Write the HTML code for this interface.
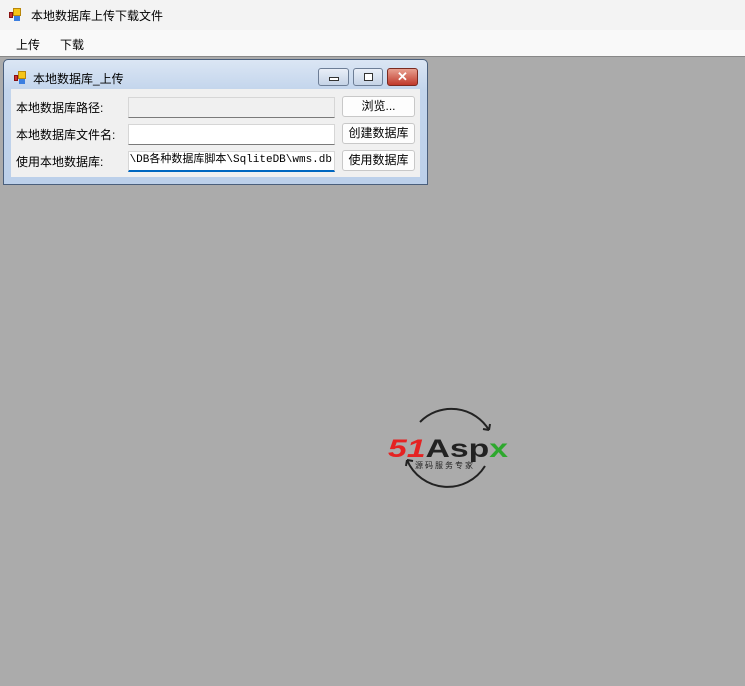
<!DOCTYPE html>
<html><head><meta charset="utf-8"><style>
*{margin:0;padding:0;box-sizing:border-box}
body{width:745px;height:686px;overflow:hidden;background:#ababab;font-family:"Liberation Sans","Noto Sans CJK SC",sans-serif;font-size:12px;color:#000;position:relative}
.title{position:absolute;left:0;top:0;width:745px;height:30px;background:#f3f3f3}
.title span{position:absolute;left:31px;top:7px;font-size:12px}
.menu{position:absolute;left:0;top:30px;width:745px;height:27px;background:#f9f9f9;border-bottom:1px solid #888}
.menu span{position:absolute;top:6px;font-size:12px}
.icon{position:absolute;width:14px;height:14px}
.icon i{position:absolute;display:block}
.child{position:absolute;left:3px;top:59px;width:425px;height:126px;border:1px solid #4a5f7c;border-radius:5px 5px 0 0;background:linear-gradient(#dbe6f4,#c3d5ec 30px,#bcd0ea)}
.child .t{position:absolute;left:29px;top:10px;font-size:12px}
.client{position:absolute;left:7px;top:29px;width:409px;height:88px;background:#f0f0f0}
.lbl{position:absolute;left:5px;font-size:12px}
.tb{position:absolute;left:117px;width:207px;height:21px;background:#fff;border:1px solid #d6d6d6;border-bottom:1px solid #7a7a7a}
.btn{position:absolute;left:331px;width:73px;height:21px;background:#fdfdfd;border:1px solid #c8c8c8;border-radius:3px;text-align:center;line-height:19px;font-size:12px}
.cb{position:absolute;top:8px;height:18px;border:1px solid #6d7e96;border-radius:3px;background:linear-gradient(#e9eff8,#c5d3e6)}
</style></head><body>
<div class="title">
 <div class="icon" style="left:9px;top:8px"><i style="left:0;top:4px;width:4px;height:6px;background:#c33;border:1px solid #811"></i><i style="left:4px;top:0;width:8px;height:8px;background:#f5c518;border:1px solid #b8860b"></i><i style="left:5px;top:8px;width:6px;height:5px;background:#3b7ee0"></i></div>
 <span>本地数据库上传下载文件</span>
</div>
<div class="menu"><span style="left:16px">上传</span><span style="left:60px">下载</span></div>
<div class="child">
 <div class="icon" style="left:10px;top:11px"><i style="left:0;top:4px;width:4px;height:6px;background:#c33;border:1px solid #811"></i><i style="left:4px;top:0;width:8px;height:8px;background:#f5c518;border:1px solid #b8860b"></i><i style="left:5px;top:8px;width:6px;height:5px;background:#3b7ee0"></i></div>
 <div class="t">本地数据库_上传</div>
 <div class="cb" style="left:314px;width:31px"><div style="position:absolute;left:10px;top:8px;width:10px;height:4px;border:1px solid #333;background:#fff"></div></div>
 <div class="cb" style="left:349px;width:30px"><div style="position:absolute;left:10px;top:4px;width:9px;height:8px;border:1px solid #333;background:#fff"></div></div>
 <div class="cb" style="left:383px;width:31px;border-color:#7a2a20;background:linear-gradient(#e8a090,#c0392b)"><div style="position:absolute;left:9px;top:0;color:#fff;font-weight:bold;font-size:13px">✕</div></div>
 <div class="client">
  <div class="lbl" style="top:10px">本地数据库路径:</div>
  <div class="tb" style="top:8px;background:#f0f0f0"></div>
  <div class="btn" style="top:7px">浏览...</div>
  <div class="lbl" style="top:37px">本地数据库文件名:</div>
  <div class="tb" style="top:35px"></div>
  <div class="btn" style="top:34px">创建数据库</div>
  <div class="lbl" style="top:64px">使用本地数据库:</div>
  <div class="tb" style="top:62px;border-bottom:2px solid #0067c0;overflow:hidden;font-family:'Liberation Mono','Noto Sans CJK SC',monospace;font-size:11px;line-height:17px;padding-right:2px;white-space:nowrap;direction:rtl;text-align:right"><span style="direction:ltr;unicode-bidi:embed">t\DB各种数据库脚本\SqliteDB\wms.db</span></div>
  <div class="btn" style="top:61px">使用数据库</div>
 </div>
</div>
<svg style="position:absolute;left:385px;top:400px" width="130" height="96" viewBox="0 0 130 96">
 <path d="M35 22 A44 44 0 0 1 104 30" fill="none" stroke="#222" stroke-width="2"/>
 <path d="M104 30 l1 -6 M104 30 l-6 -1" stroke="#222" stroke-width="2"/>
 <path d="M100 66 A44 44 0 0 1 22 60" fill="none" stroke="#222" stroke-width="2"/>
 <path d="M22 60 l-1 6 M22 60 l6 1" stroke="#222" stroke-width="2"/>
 <text x="3" y="57" font-family="Liberation Sans" font-weight="bold" font-size="25" textLength="120" lengthAdjust="spacingAndGlyphs"><tspan fill="#e52222" font-style="italic">51</tspan><tspan fill="#222">Asp</tspan><tspan fill="#2ea82e">x</tspan></text>
 <text x="30" y="68" font-family="Noto Sans CJK SC" font-size="8" fill="#222" letter-spacing="2">源码服务专家</text>
</svg>
</body></html>
